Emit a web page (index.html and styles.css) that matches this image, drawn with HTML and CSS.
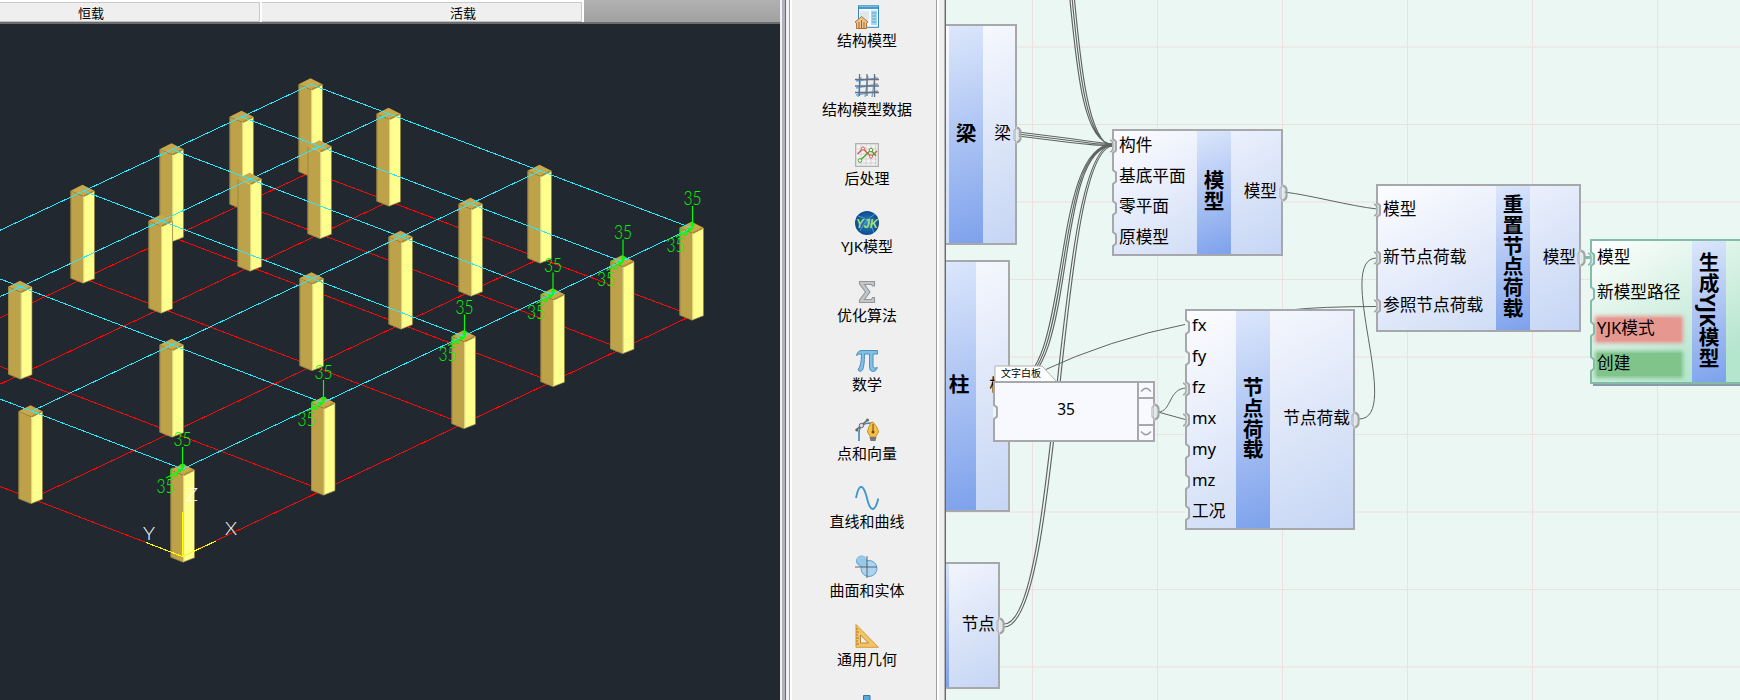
FILE: index.html
```html
<!DOCTYPE html>
<html lang="zh-CN">
<head>
<meta charset="utf-8">
<title>YJK模型</title>
<link rel="stylesheet" href="styles.css">
</head>
<body>
<div class="app">
  <section class="viewer">
    <div class="tabs">
      <div class="tab tab-dead">恒载</div>
      <div class="tab tab-live">活载</div>
      <div class="tabs-rest"></div>
    </div>
    <svg class="scene" width="780" height="676" viewBox="0 24 780 676">
      <defs>
        <g id="col" transform="translate(-.5 -.8)">
          <path d="M-12 0.5L0.5 6V93L-12 88Z" fill="#bda24a"/>
          <path d="M0.5 6L12 0.5V88.5L0.5 93Z" fill="#ffff8e"/>
          <path d="M0 -5.5L12 0.5L1 6L-12 0.5Z" fill="#c9a84c"/>
          <path d="M-11.5 1V88L0.5 93L12 88.5V1" fill="none" stroke="#8d7c3e" stroke-width=".7"/>
          <path d="M1 6L11 1" stroke="#a78937" stroke-width="1.6"/>
          <path d="M1.2 7V92" stroke="#d8cc74" stroke-width="1"/>
        </g>
        <g id="load">
          <path d="M0.5 -22V0" stroke="#0f0" stroke-width="1.2"/>
          <path d="M-2 -5H3L0.5 1Z" fill="#0f0"/>
          <path d="M1 0L-16 9M-11 8V1Q-11 -1 -8 -1M-9 7Q-4 8 -5 3" fill="none" stroke="#0f0" stroke-width="1.1"/>
          <path d="M1 0L-5 0L-2 4Z" fill="#0f0"/>
          <text class="cad" x="-8.5" y="-23" textLength="18" lengthAdjust="spacingAndGlyphs">35</text>
          <text class="cad" x="-25.5" y="24" textLength="18" lengthAdjust="spacingAndGlyphs">35</text>
        </g>
        <g id="plan">
          <path d="M311 84.5L-57 257M389 114L-120 353M540 171L31 411.5M692 228L182.5 469M311 84.5L692 228M242 117L622 261.5M172 149.5L552.5 294.5M83.5 191L464 336.5M-57 257L323.5 403M-120 353L182.5 469"/>
        </g>
      </defs>
      <use href="#plan" y="87.5" class="wire-base"/>
      <use href="#col" x="311" y="84.5"/><use href="#col" x="389" y="114"/>
      <use href="#col" x="242" y="117"/><use href="#col" x="320" y="146.5"/>
      <use href="#col" x="172" y="149.5"/><use href="#col" x="540" y="171"/>
      <use href="#col" x="250" y="179"/><use href="#col" x="83" y="191"/>
      <use href="#col" x="471" y="204"/><use href="#col" x="161" y="221"/>
      <use href="#col" x="692" y="228"/><use href="#col" x="401" y="237"/>
      <use href="#col" x="622.5" y="261.5"/><use href="#col" x="312" y="278.5"/>
      <use href="#col" x="20.5" y="287"/><use href="#col" x="553" y="294.5"/>
      <use href="#col" x="464" y="336.5"/><use href="#col" x="172" y="345"/>
      <use href="#col" x="323.5" y="403"/><use href="#col" x="31" y="411.5"/>
      <use href="#col" x="183" y="470"/>
      <use href="#plan" class="wire-top"/>
      <use href="#load" x="692" y="228"/><use href="#load" x="622.5" y="261.500"/>
      <use href="#load" x="552.500" y="294.500"/><use href="#load" x="464" y="336.500"/>
      <use href="#load" x="323" y="402"/><use href="#load" x="182" y="469"/>
      <path class="ucs" d="M182.500 512V556.500M146 542.500L182.500 556.500L216 541"/>
      <text class="axis" x="186" y="501" textLength="12" lengthAdjust="spacingAndGlyphs">Z</text>
      <text class="axis" x="143" y="540" textLength="12" lengthAdjust="spacingAndGlyphs">Y</text>
      <text class="axis" x="225" y="535" textLength="12" lengthAdjust="spacingAndGlyphs">X</text>
    </svg>
  </section>
  <div class="split"></div>
  <nav class="sidebar">
    <div class="item"><svg class="ico" viewBox="0 0 24 24"><rect x="3.5" y=".8" width="20" height="21.5" fill="#f7fbfd" stroke="#3487b8"/><path d="M4 1.5H23V4H4Z" fill="#3d9cd1"/><path d="M5 6H14V16H5Z" fill="#e1e8ed"/><path d="M16 5.5H22V20H16Z" fill="#a6d6ef"/><path d="M17 8H21M17 11H21M17 14H21M17 17H21" stroke="#5aa4cc"/><path d="M0 17L6.5 11.5L13 17L11.5 18V23.5H1.5V18Z" fill="#edc48c" stroke="#a97837"/><path d="M4 23V17M6.5 23V15M9 23V17" stroke="#9b6b30"/></svg><span>结构模型</span></div>
    <div class="item"><svg class="ico" viewBox="0 0 24 24"><path d="M1 7L23 4M1 14L23 10M1 21L23 17M6 3L3 23M13 2L10 23M20 2L17 23" stroke="#6baadd" stroke-width="1.3" fill="none"/><path d="M0 5.5H24M0 12H24M0 18.5H24M4.5 0V22M12 0V22M19.5 0V23" stroke="#68717b" stroke-width="1.3"/></svg><span>结构模型数据</span></div>
    <div class="item"><svg class="ico" viewBox="0 0 24 24"><rect x=".7" y=".7" width="22.6" height="22.6" fill="#f3f3f3" stroke="#aaa" stroke-width="1.2"/><path d="M6 2V22M11 2V22M16 2V22M20.500 2V22M2 6H22M2 11H22M2 16H22M2 20H22" stroke="#d2d2d2"/><path d="M2.500 11L8 5.500L16 14L22 8" fill="none" stroke="#d75748" stroke-width="1.4"/><path d="M5 17.500L16 7L21 13" fill="none" stroke="#51a12c" stroke-width="1.4"/><circle cx="8" cy="5.500" r="1.600" fill="#fff" stroke="#d75748"/><circle cx="16" cy="13.500" r="1.600" fill="#fff" stroke="#d75748"/><circle cx="5" cy="17.500" r="1.800" fill="#fff" stroke="#51a12c"/><circle cx="16" cy="7" r="1.800" fill="#fff" stroke="#51a12c"/></svg><span>后处理</span></div>
    <div class="item"><svg class="ico" viewBox="0 0 24 24"><defs><radialGradient id="globe"><stop offset="0" stop-color="#2d86c5"/><stop offset="1" stop-color="#0b4b8e"/></radialGradient></defs><circle cx="12" cy="12" r="12" fill="url(#globe)"/><path d="M3 5Q15 7 19 22M5 20Q10 9 20 3" fill="none" stroke="#63a9d8" stroke-width=".8"/><text x="1" y="17" class="globe-text" textLength="22" lengthAdjust="spacingAndGlyphs">YJK</text></svg><span>YJK模型</span></div>
    <div class="item"><svg class="ico" viewBox="0 0 24 24"><path d="M4.500 1.500H19.500V6H17.500L16.500 4.500H9.500L15 12L9.500 19.500H16.500L17.500 17.500H19.500V22.500H4.500V20L10.500 12L4.500 4Z" fill="#c3c5c7" stroke="#93979a" stroke-width="1.100"/></svg><span>优化算法</span></div>
    <div class="item"><svg class="ico" viewBox="0 0 24 24"><path d="M1.500 6.500Q2.500 1.500 7 1.500H22.500V5H18V17Q18 20 22.500 18.500Q21 23 17.500 22.500Q14.500 22 14.500 18V5H9.500Q9.500 17 7.500 21Q5 24 3 21Q6.500 16 6.500 5Q3.500 4.500 1.500 6.500Z" fill="#82bfe7" stroke="#4c8fc0"/></svg><span>数学</span></div>
    <div class="item"><svg class="ico" viewBox="0 0 24 24"><path d="M4 23V15Q4 5 16 5" fill="none" stroke="#3f89b9" stroke-width="1.600"/><path d="M1 12L13 1.500" stroke="#666" stroke-width="1.600"/><circle cx="1.800" cy="12" r="1.500" fill="#666"/><circle cx="12.500" cy="2" r="1.500" fill="#666"/><circle cx="6.500" cy="7.500" r="2.200" fill="#ddd" stroke="#666"/><path d="M18 4Q23.500 11 23.500 14L20.500 19H15.500L12.500 14Q12.500 11 16 4.500Z" fill="#f6c044" stroke="#ce922b"/><path d="M18 6V14" stroke="#6f5625" stroke-width="1.100"/><circle cx="18" cy="14" r="1.500" fill="#5e4b25"/><path d="M14.500 19H21.500L20.500 23H15.500Z" fill="#777"/></svg><span>点和向量</span></div>
    <div class="item"><svg class="ico" viewBox="0 0 24 24"><path d="M1 12C4-3 8-3 12 12C15 26 20 27 23.300 12.500" fill="none" stroke="#3f98cb" stroke-width="1.900"/></svg><span>直线和曲线</span></div>
    <div class="item"><svg class="ico" viewBox="0 0 24 24"><circle cx="6.500" cy="6" r="5" fill="#8cbfe2" stroke="#609fcd"/><circle cx="14" cy="13.500" r="8" fill="#acd4ee" stroke="#609fcd"/><path d="M1.500 6A5 5 0 0 1 11.500 6L13 13L6 11Z" fill="#98c9e8"/><path d="M0 12H22M12 1V23" stroke="#4a5a66" stroke-width=".9"/></svg><span>曲面和实体</span></div>
    <div class="item"><svg class="ico" viewBox="0 0 24 24"><path d="M1 .5V23.300H23.500Z" fill="#f3c367" stroke="#d29b3c"/><path d="M5.500 11V19H13.500Z" fill="#efefef" stroke="#bd862f"/><path d="M1 5H3M1 8H4M1 11H3M1 14H4M1 17H3M1 20H4" stroke="#b77a25"/></svg><span>通用几何</span></div>
    <div class="item"><svg class="ico" viewBox="0 0 24 24"><path d="M8.500 2.500H15V9H22V15H2V9H8.500Z" fill="#5ba7d8" stroke="#2f78ad"/></svg></div>
  </nav>
  <div class="rail"></div>
  <main class="graph">
    <svg class="wires" width="794" height="700" viewBox="946 0 794 700">
      <path class="grid" d="M1032.500 0V700M1157.500 0V700M1282.500 0V700M1407.500 0V700M1532.500 0V700M1657.500 0V700M946 47H1740M946 124.500H1740M946 202H1740M946 279.500H1740M946 357H1740M946 434.500H1740M946 512H1740M946 589.500H1740M946 667H1740"/>
      <g class="wire">
        <path d="M1069 -10C1076 60 1082 145 1113 144M1071.300 -10C1078 60 1085 145 1113 145M1073.600 -10C1080 60 1088 145 1113 146"/>
        <path d="M1018 132L1070 138.500Q1095 142 1113 144M1018 134L1070 140.500Q1095 144 1113 145M1018 136L1070 142.500Q1095 145.500 1113 146"/>
        <path d="M1010 384C1073 384 1048 145 1113 144M1012 384C1075.500 384 1050.500 145 1113 145M1014 384C1078 384 1053 145 1113 146"/>
        <path d="M1004 624C1059 624 1054 145 1113 144.500M1004 627C1063 627 1057 147 1113 146"/>
      </g>
      <g class="wire wire-thin">
        <path d="M1284 192C1310 195 1350 206 1377 209"/>
        <path d="M1040 372Q1110 339 1187 324"/>
        <path d="M1290 310Q1320 306.500 1377 306.500"/>
        <path d="M1158 412C1172 412 1168 388 1187 388M1158 412L1187 420"/>
        <path d="M1359 419C1404 419 1333 258 1377 258"/>
      </g>
      <path d="M1584 257.500H1592" stroke="#87bdad" stroke-width="3"/>
    </svg>

    <svg class="defs" width="0" height="0">
      <symbol id="pin" viewBox="0 0 8 20"><path d="M0 1.500L3.500 5V15L0 18.500Z" fill="#ebf7f3"/><path d="M1 0V3L4 5.500V14.500L1 17V20" fill="none" stroke="currentColor" stroke-width="2"/></symbol>
      <symbol id="pin-used" viewBox="-3 0 11 20"><path d="M0 1.500L3.500 5V15L0 18.500Z" fill="#dbe5e3"/><path d="M1 0V3L4 5.500V14.500L1 17V20" fill="none" stroke="currentColor" stroke-width="2"/><path d="M-2 4Q1 5 1 8V12Q1 15 -2 16" fill="none" stroke="currentColor" stroke-width="1.500"/></symbol>
      <symbol id="pout" viewBox="0 0 10 20"><path d="M5 1L2.500 5V15L5 19Z" fill="#e4ebf0"/><path d="M3 0V3L1 5.500V14.500L3 17V20" fill="none" stroke="#b4b7bb" stroke-width="1.200"/><path d="M4 2Q4.500 4 5 5V15Q4.500 16 4 18" fill="none" stroke="#e0e4e4" stroke-width="1.500"/><path d="M4 2.500Q7.500 4 7.500 7V13Q7.500 16 4 17.500" fill="none" stroke="#a3a5a7" stroke-width="2.200"/></symbol>
    </svg>

    <div class="node n-beam">
      <div class="ins"></div><div class="band">梁</div>
      <div class="outs"><div class="port">梁<svg class="po"><use href="#pout"/></svg></div></div>
    </div>
    <div class="node n-column">
      <div class="ins"></div><div class="band">柱</div>
      <div class="outs"><div class="port">柱</div></div>
    </div>
    <div class="node n-joint">
      <div class="ins"></div><div class="band"></div>
      <div class="outs"><div class="port">节点<svg class="po"><use href="#pout"/></svg></div></div>
    </div>
    <div class="node n-model">
      <div class="ins">
        <div class="port"><svg class="pi used"><use href="#pin-used"/></svg>构件</div>
        <div class="port"><svg class="pi"><use href="#pin"/></svg>基底平面</div>
        <div class="port"><svg class="pi"><use href="#pin"/></svg>零平面</div>
        <div class="port"><svg class="pi"><use href="#pin"/></svg>原模型</div>
      </div>
      <div class="band">模型</div>
      <div class="outs"><div class="port">模型<svg class="po"><use href="#pout"/></svg></div></div>
    </div>
    <div class="node n-load">
      <div class="ins">
        <div class="port"><svg class="pi"><use href="#pin"/></svg>fx</div>
        <div class="port"><svg class="pi"><use href="#pin"/></svg>fy</div>
        <div class="port"><svg class="pi used"><use href="#pin-used"/></svg>fz</div>
        <div class="port"><svg class="pi used"><use href="#pin-used"/></svg>mx</div>
        <div class="port"><svg class="pi"><use href="#pin"/></svg>my</div>
        <div class="port"><svg class="pi"><use href="#pin"/></svg>mz</div>
        <div class="port"><svg class="pi"><use href="#pin"/></svg>工况</div>
      </div>
      <div class="band">节点荷载</div>
      <div class="outs"><div class="port">节点荷载<svg class="po"><use href="#pout"/></svg></div></div>
    </div>
    <div class="node n-reset">
      <div class="ins">
        <div class="port"><svg class="pi used"><use href="#pin-used"/></svg>模型</div>
        <div class="port"><svg class="pi used"><use href="#pin-used"/></svg>新节点荷载</div>
        <div class="port"><svg class="pi used"><use href="#pin-used"/></svg>参照节点荷载</div>
      </div>
      <div class="band">重置节点荷载</div>
      <div class="outs"><div class="port">模型<svg class="po"><use href="#pout"/></svg></div></div>
    </div>
    <div class="node n-build">
      <div class="ins">
        <div class="port"><svg class="pi used"><use href="#pin-used"/></svg>模型</div>
        <div class="port"><svg class="pi"><use href="#pin"/></svg>新模型路径</div>
        <div class="port flag-off"><svg class="pi"><use href="#pin"/></svg><span>YJK模式</span></div>
        <div class="port flag-on"><svg class="pi"><use href="#pin"/></svg><span>创建</span></div>
      </div>
      <div class="band">生成YJK模型</div>
      <div class="outs"></div>
    </div>

    <div class="board">
      <div class="board-tab"><svg width="64" height="17" viewBox="0 0 64 17"><path d="M1 17V1H48L63 17" fill="#fff" stroke="#b0b0b0"/></svg><span>文字白板</span></div>
      <div class="board-body">
        <svg class="pi"><use href="#pin"/></svg>
        <div class="value">35</div>
        <div class="spin">
          <div class="step"><svg width="12" height="6" viewBox="0 0 12 6"><path d="M1 4.500L4.500 1.500H7.500L11 4.500" fill="none" stroke="#999" stroke-width="1.500"/></svg></div>
          <div class="gap"></div>
          <div class="step"><svg width="12" height="6" viewBox="0 0 12 6"><path d="M1 1.500L4.500 4.500H7.500L11 1.500" fill="none" stroke="#999" stroke-width="1.500"/></svg></div>
        </div>
        <svg class="po"><use href="#pout"/></svg>
      </div>
    </div>
  </main>
</div>
</body>
</html>
```
FILE: styles.css
```css
* { box-sizing: border-box; }
body {
  margin: 0;
  overflow: hidden;
  font-family: "Noto Sans", "Noto Sans CJK SC", sans-serif;
  color: #000;
}
.app { display: flex; width: 1740px; height: 700px; background: #efefef; }

/* 3D view */
.viewer { width: 780px; height: 700px; display: flex; flex-direction: column; background: #222830; }
.tabs {
  display: flex;
  flex: 0 0 24px;
  width: 782px;
  border-bottom: 2px solid #6c6c6c;
  background: #fff;
}
.tab {
  border-top: 2px solid #fff;
  border-right: 2px solid #fff;
  box-shadow: inset 0 1px #c8c8c8, inset -1px 0 #c8c8c8, inset 0 -1px #bdbdbd;
  background: #efefef;
  font-size: 13px;
  line-height: 20px;
  height: 22px;
  padding-top: 1px;
}
.tab-dead { width: 262px; padding-left: 78px; }
.tab-live { width: 322px; padding-left: 188px; }
.tabs-rest { flex: 1; background: linear-gradient(#b1b1b1, #a1a1a1); }
.scene { display: block; flex: none; }
.wire-base { stroke: #fb0606; stroke-width: 1; shape-rendering: crispEdges; }
.wire-top { stroke: #2fe6f8; stroke-width: 1; shape-rendering: crispEdges; }
.cad { font: 300 19.5px Lato, sans-serif; fill: #0f0; }
.ucs { stroke: #ff0; stroke-width: 1.1; fill: none; shape-rendering: crispEdges; }
.axis { font: 300 17px Lato, sans-serif; fill: #fff; }

.split {
  width: 12px;
  background: linear-gradient(90deg, #f2f2f2 0 2px, #b0b3bb 2px 5px, #696969 5px 6px, #f2f2f2 6px 9px, #a0a0a0 9px 10px, #fff 10px 12px);
}

/* Component categories */
.sidebar {
  width: 144px;
  height: 700px;
  overflow: hidden;
  padding: 5px 0 0 6px;
  display: flex;
  flex-direction: column;
}
.item {
  flex: 0 0 68.75px;
  display: flex;
  flex-direction: column;
  align-items: center;
  font-size: 15px;
  line-height: 22px;
  white-space: nowrap;
}
.ico { width: 24px; height: 24px; flex: none; }
.globe-text { font: italic bold 13px "Liberation Sans", sans-serif; fill: #a5df75; }
.rail {
  width: 10px;
  background: linear-gradient(90deg, #a0a0a0 0 1px, #fff 1px 3px, #efefef 3px 8px, #b5b5b5 8px 9px, #696969 9px 10px);
}

/* Node graph */
.graph { position: relative; width: 794px; height: 700px; overflow: hidden; background: #ebf7f3; }
.wires { display: block; }
.defs { position: absolute; }
.grid { stroke: #eedfe1; stroke-width: 1; fill: none; }
.wire { fill: none; stroke: #5f6462; stroke-width: 1.15; }
.wire-thin { stroke-width: 1; }

.node {
  position: absolute;
  display: flex;
  border: 2px solid #a6a8ab;
  background: linear-gradient(150deg, #fdfdff, #c5d5f4);
  color: #000;
  font-size: 16.7px;
}
.ins, .outs { display: flex; flex-direction: column; }
.ins { flex: 1; }
.port { position: relative; flex: 1; display: flex; align-items: center; white-space: nowrap; padding-bottom: 5px; }
.ins .port { padding-left: 5px; }
.outs .port { justify-content: flex-end; padding-right: 4px; }
.band {
  width: 34px;
  padding: 0 1px 3px 0;
  background: linear-gradient(160deg, #dce7fb, #7da1ec);
  writing-mode: vertical-rl;
  text-align: center;
  line-height: 34px;
  font-size: 20.7px;
  font-weight: 700;
  white-space: nowrap;
}
.pi, .po { position: absolute; height: 20px; top: calc(50% - 10px); overflow: visible; color: #a6a8ab; }
.pi { left: -2px; width: 8px; }
.pi.used { left: -5px; width: 11px; }
.po { right: -8px; width: 10px; }

.n-beam { left: -21px; top: 24px; width: 92px; height: 221px; }
.n-beam .outs { width: 32px; }
.n-column { left: -46px; top: 260px; width: 110px; height: 252px; }
.n-column .outs { width: 32px; }
.n-column .port { padding-right: 2px; }
.n-joint { left: -66px; top: 562px; width: 120px; height: 127px; }
.n-joint .outs { width: 49px; }
.n-joint .port { padding-right: 3px; }
.n-model { left: 166px; top: 129px; width: 171px; height: 127px; }
.n-model .outs { width: 50px; }
.n-load { left: 239px; top: 309px; width: 170px; height: 221px; }
.n-load .outs { width: 83px; }
.n-load .outs .port { padding-right: 3px; }
.n-reset { left: 430px; top: 184px; width: 205px; height: 148px; }
.n-reset .outs { width: 49px; }
.n-reset .outs .port { padding-right: 3px; }
.n-build {
  left: 644px;
  top: 239px;
  width: 210px;
  height: 145px;
  border-color: #83bda9;
  background: linear-gradient(150deg, #fff, #b4e5cd 75%);
  box-shadow: 3px 2px #879ca5;
}
.n-build .ins { flex: 0 0 100px; }
.n-build .pi { color: #83bda9; }
.flag-off::before, .flag-on::before {
  content: "";
  position: absolute;
  left: 5px;
  right: 11px;
  top: 6px;
  bottom: 6px;
}
.flag-off::before { background: #e69790; box-shadow: 0 0 4px 2px #e69790; }
.flag-on::before { background: #80c48b; box-shadow: 0 0 4px 2px #80c48b; }
.port span { position: relative; }

/* Text panel */
.board { position: absolute; left: 47px; top: 365px; width: 162px; }
.board-tab { position: relative; width: 64px; height: 16px; font-size: 10px; line-height: 16px; }
.board-tab svg { display: block; margin-left: 1px; }
.board-tab span { position: absolute; left: 8px; top: 0; }
.board-body {
  position: relative;
  display: flex;
  height: 61px;
  border: 2px solid #a6a8ab;
  background: #f8f9fe;
}
.value { flex: 1; text-align: center; font-size: 15.5px; line-height: 53px; }
.spin { width: 16px; display: flex; flex-direction: column; border-left: 2px solid #a6a8ab; }
.step { height: 14px; display: flex; align-items: center; justify-content: center; }
.gap { flex: 1; border: solid #a6a8ab; border-width: 2px 0; }
```
